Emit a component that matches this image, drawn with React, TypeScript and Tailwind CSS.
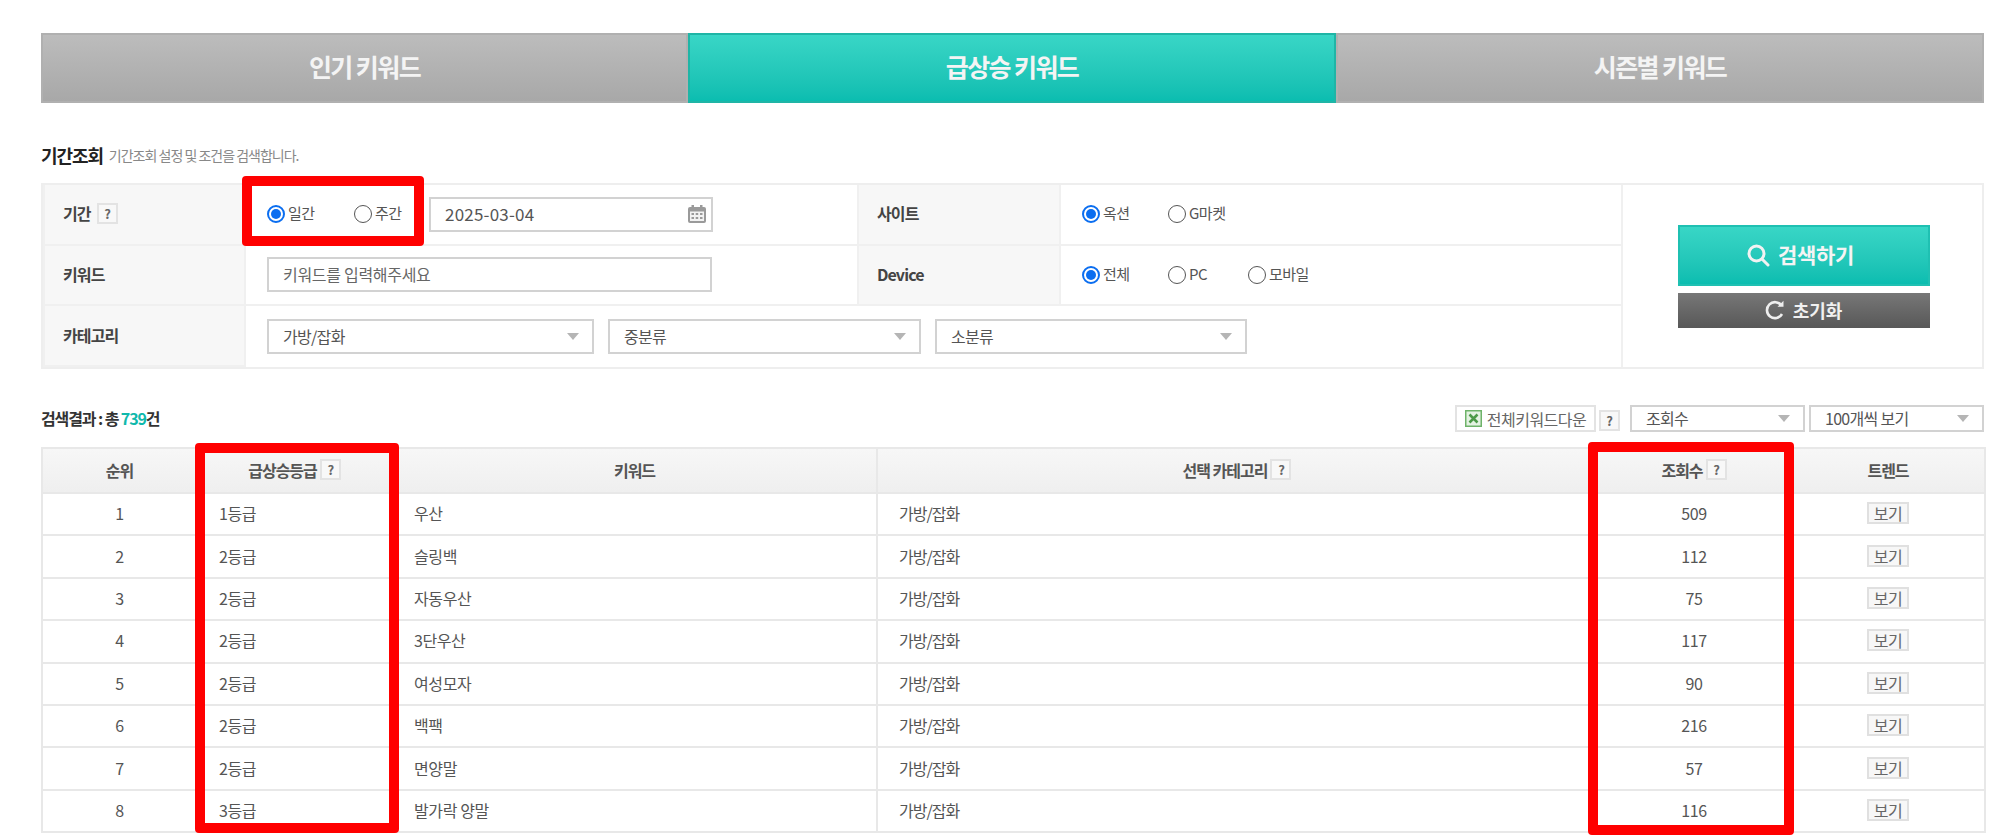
import React from "react";

const rows = [
  { rank: 1, grade: "1등급", keyword: "우산", views: 509 },
  { rank: 2, grade: "2등급", keyword: "슬링백", views: 112 },
  { rank: 3, grade: "2등급", keyword: "자동우산", views: 75 },
  { rank: 4, grade: "2등급", keyword: "3단우산", views: 117 },
  { rank: 5, grade: "2등급", keyword: "여성모자", views: 90 },
  { rank: 6, grade: "2등급", keyword: "백팩", views: 216 },
  { rank: 7, grade: "2등급", keyword: "면양말", views: 57 },
  { rank: 8, grade: "3등급", keyword: "발가락 양말", views: 116 },
];

const Help = () => (
  <span className="inline-flex w-[21px] h-[21px] items-center justify-center border-2 border-[#e3e3e3] bg-[#f8f8f8] text-[13px] font-bold text-[#666] leading-none">
    ?
  </span>
);

const Radio = ({ label, checked, className }: { label: string; checked?: boolean; className: string }) => (
  <span className={`flex items-center gap-[3px] ${className}`}>
    {checked ? (
      <span className="flex w-[18px] h-[18px] shrink-0 items-center justify-center rounded-full border-2 border-[#0b6ef0] bg-white">
        <span className="w-[10px] h-[10px] rounded-full bg-[#0b6ef0]"></span>
      </span>
    ) : (
      <span className="w-[18px] h-[18px] shrink-0 rounded-full border border-[#555] bg-white"></span>
    )}
    <span className="pb-[2px] text-[15px] tracking-[-0.5px] text-[#555]">{label}</span>
  </span>
);

const Arrow = () => (
  <svg width="14" height="9" viewBox="0 0 14 9" className="shrink-0">
    <path d="M1 1h12L7 8z" fill="#b5b5b5" />
  </svg>
);

const Select = ({ label, className }: { label: string; className: string }) => (
  <div className={`flex items-center justify-between border-2 border-[#d2d2d2] bg-white pl-[14px] pr-[12px] ${className}`}>
    <span className="pb-[2px] text-[16px] tracking-[-0.7px] text-[#555]">{label}</span>
    <Arrow />
  </div>
);

const Label = ({ children }: { children: React.ReactNode }) => (
  <div className="flex items-center gap-[6px] border-x-2 border-b-2 border-[#f0f0f0] bg-[#f7f7f7] pb-[2px] pl-[18px] text-[16px] font-bold tracking-[-0.9px] text-[#444]">
    {children}
  </div>
);

const Th = ({ children }: { children: React.ReactNode }) => (
  <th className="border-2 border-[#e8e8e8] bg-gradient-to-b from-[#f7f7f7] to-[#efefef] pb-[2px] text-[16px] font-bold tracking-[-1px] text-[#555]">
    <span className="inline-flex items-center justify-center gap-[3px]">{children}</span>
  </th>
);

const Td = ({ children, left, className }: { children: React.ReactNode; left?: boolean; className?: string }) => (
  <td className={`border-2 border-[#e8e8e8] pb-[2px] text-[16px] text-[#555] ${left ? "pl-[21px] text-left" : "text-center"} ${className ?? "tracking-[-0.4px]"}`}>
    {children}
  </td>
);

const App = () => {
  return (
    <div className="relative h-[837px] w-[2000px] overflow-hidden bg-white pl-[41px] pr-[16px] pt-[33px] font-['Noto_Sans_CJK_KR',sans-serif]">
      {/* tabs */}
      <div className="flex h-[70px]">
        <div className="flex w-[647px] items-center justify-center border-2 border-[#b0b0b0] bg-gradient-to-b from-[#bcbcbc] to-[#a8a8a8] pb-[3px] text-[25px] font-bold tracking-[-1.6px] text-[#f4f4f4]">
          인기 키워드
        </div>
        <div className="flex w-[648px] items-center justify-center border-2 border-[#1fb5a6] bg-gradient-to-b from-[#38d6c6] to-[#0abdb0] pb-[3px] text-[25px] font-bold tracking-[-1.6px] text-[#f4f4f4]">
          급상승 키워드
        </div>
        <div className="flex flex-1 items-center justify-center border-2 border-[#b0b0b0] bg-gradient-to-b from-[#bcbcbc] to-[#a8a8a8] pb-[3px] text-[25px] font-bold tracking-[-1.6px] text-[#f4f4f4]">
          시즌별 키워드
        </div>
      </div>

      {/* title */}
      <div className="mt-[38px] flex h-[28px] items-center gap-[6px]">
        <span className="text-[18px] font-bold tracking-[-1.100px] text-[#222]">기간조회</span>
        <span className="mt-[1px] text-[14px] tracking-[-1px] text-[#888]">기간조회 설정 및 조건을 검색합니다.</span>
      </div>

      {/* filter box */}
      <div className="mt-[14px] flex h-[186px] border-2 border-[#eeeeee]">
        <div className="grid w-[1580px] grid-cols-[203px_611px_204px_1fr] grid-rows-3 border-r-2 border-[#f0f0f0]">
          <Label>
            기간 <Help />
          </Label>
          <div className="flex items-center border-b-2 border-[#f0f0f0]">
            <Radio label="일간" checked className="ml-[21px] w-[87px]" />
            <Radio label="주간" className="w-[75px]" />
            <div className="flex h-[35px] w-[284px] items-center justify-between border-2 border-[#d2d2d2] pl-[14px] pr-[4px]">
              <span className="pb-[2px] text-[17px] tracking-[0.2px] text-[#555]">2025-03-04</span>
              <svg width="20" height="20" viewBox="0 0 20 20">
                <rect x="1" y="3" width="18" height="16" rx="2" fill="#9a9a9a" />
                <rect x="3" y="7.500" width="14" height="9.500" fill="#f2f2f2" />
                <rect x="4.500" y="1" width="2.500" height="4" fill="#9a9a9a" />
                <rect x="13" y="1" width="2.500" height="4" fill="#9a9a9a" />
                <path d="M4.500 9h2.500v2H4.500zM8.700 9h2.500v2H8.700zM13 9h2.500v2H13zM4.500 13h2.500v2H4.500zM8.700 13h2.500v2H8.700zM13 13h2.500v2H13z" fill="#9a9a9a" />
              </svg>
            </div>
          </div>
          <Label>사이트</Label>
          <div className="flex items-center border-b-2 border-[#f0f0f0]">
            <Radio label="옥션" checked className="ml-[21px] w-[86px]" />
            <Radio label="G마켓" className="w-[80px]" />
          </div>

          <Label>키워드</Label>
          <div className="flex items-center border-b-2 border-[#f0f0f0] pl-[21px]">
            <div className="flex h-[35px] w-[445px] items-center border-2 border-[#d2d2d2] pb-[2px] pl-[14px] text-[16px] tracking-[-0.3px] text-[#666]">
              키워드를 입력해주세요
            </div>
          </div>
          <Label>Device</Label>
          <div className="flex items-center border-b-2 border-[#f0f0f0]">
            <Radio label="전체" checked className="ml-[21px] w-[86px]" />
            <Radio label="PC" className="w-[80px]" />
            <Radio label="모바일" className="w-[70px]" />
          </div>

          <Label>카테고리</Label>
          <div className="col-span-3 flex items-center pl-[21px]">
            <Select label="가방/잡화" className="h-[35px] w-[327px]" />
            <Select label="중분류" className="ml-[14px] h-[35px] w-[313px]" />
            <Select label="소분류" className="ml-[14px] h-[35px] w-[312px]" />
          </div>
        </div>
        <div className="flex flex-1 flex-col items-center justify-center gap-[7px] pl-[2px]">
          <div className="flex h-[61px] w-[252px] items-center justify-center gap-[8px] border-2 border-[#1fc0b2] bg-gradient-to-b from-[#38d6c6] to-[#0abdb0] pr-[7px] text-[21px] font-bold tracking-[-0.3px] text-[#f4f4f4]">
            <svg width="24" height="24" viewBox="0 0 24 24" fill="none" stroke="#f2f2f2" strokeWidth="3">
              <circle cx="10.500" cy="10.500" r="7.500" />
              <path d="M16 16l6 6" strokeLinecap="round" />
            </svg>
            검색하기
          </div>
          <div className="flex h-[35px] w-[252px] items-center justify-center gap-[8px] bg-gradient-to-b from-[#777777] to-[#585858] text-[18px] font-bold text-[#f0f0f0]">
            <svg width="20" height="20" viewBox="0 0 20 20" fill="none" stroke="#eeeeee" strokeWidth="2.600">
              <path d="M16.500 5.500A8 8 0 1 0 17 14" />
              <path d="M12.500 6.800h6v-6z" fill="#eeeeee" stroke="none" />
            </svg>
            초기화
          </div>
        </div>
      </div>

      {/* result header */}
      <div className="mt-[36px] flex h-[27px] items-center justify-between">
        <span className="pb-[2px] text-[16px] font-bold tracking-[-1.100px] text-[#333]">
          검색결과 : 총 <span className="text-[#10b9ac]">739</span>건
        </span>
        <div className="flex items-center">
          <div className="flex h-[27px] w-[141px] items-center justify-center gap-[5px] border-2 border-[#e3e3e3] bg-white text-[16px] tracking-[-0.5px] text-[#666]">
            <svg width="17" height="17" viewBox="0 0 17 17">
              <rect x="0.750" y="0.750" width="15.500" height="15.500" fill="#e4f2e2" stroke="#6fb36a" strokeWidth="1.500" />
              <path d="M4.500 4.500l8 8M12.500 4.500l-8 8" stroke="#4d9a48" strokeWidth="2.500" />
            </svg>
            전체키워드다운
          </div>
          <div className="ml-[3px]">
            <Help />
          </div>
          <Select label="조회수" className="ml-[10px] h-[27px] w-[175px]" />
          <Select label="100개씩 보기" className="ml-[4px] h-[27px] w-[175px]" />
        </div>
      </div>

      {/* table */}
      <table className="mt-[15px] w-[1943px] table-fixed border-collapse">
        <colgroup>
          <col className="w-[155px]" />
          <col className="w-[195px]" />
          <col className="w-[485px]" />
          <col className="w-[720px]" />
          <col className="w-[194px]" />
          <col className="w-[194px]" />
        </colgroup>
        <thead>
          <tr className="h-[45px]">
            <Th>순위</Th>
            <Th>
              급상승등급 <Help />
            </Th>
            <Th>키워드</Th>
            <Th>
              선택 카테고리 <Help />
            </Th>
            <Th>
              조회수 <Help />
            </Th>
            <Th>트렌드</Th>
          </tr>
        </thead>
        <tbody>
          {rows.map((r) => (
            <tr key={r.rank} className="h-[42.400px]">
              <Td>{r.rank}</Td>
              <Td left>{r.grade}</Td>
              <Td left>{r.keyword}</Td>
              <Td left className="tracking-[-1px]">가방/잡화</Td>
              <Td>{r.views}</Td>
              <Td>
                <span className="inline-flex h-[22px] w-[42px] items-center justify-center border-2 border-[#e0e0e0] bg-[#f7f7f7] text-[16px] text-[#666]">
                  보기
                </span>
              </Td>
            </tr>
          ))}
        </tbody>
      </table>

      {/* red highlight boxes */}
      <div className="absolute left-[242px] top-[176px] h-[70px] w-[182px] rounded-[4px] border-[10px] border-[#ff0000]"></div>
      <div className="absolute left-[195px] top-[443px] h-[390px] w-[204px] rounded-[4px] border-[10px] border-[#ff0000]"></div>
      <div className="absolute left-[1588px] top-[442px] h-[393px] w-[206px] rounded-[4px] border-[10px] border-[#ff0000]"></div>
    </div>
  );
};

export default App;
